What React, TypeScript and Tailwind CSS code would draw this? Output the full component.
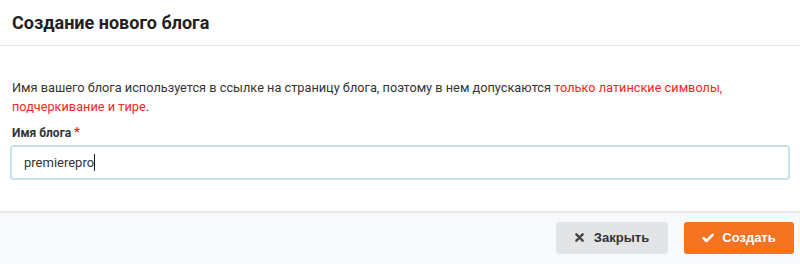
export default function App() {
  return (
    <div className="w-[800px] h-[264px] bg-white flex flex-col font-['Roboto',sans-serif] text-[#333]">
      <div className="h-[46px] border-b border-[#e6e6e6] flex items-center px-3">
        <h1 className="text-[18px] font-bold text-[#222] leading-none">Создание нового блога</h1>
      </div>
      <div className="flex-1 px-[10px] pt-[32px]">
        <p className="px-[2px] text-[12.75px] leading-[19px] text-[#333]">
          Имя вашего блога используется в ссылке на страницу блога, поэтому в нем допускаются{" "}
          <span className="text-[#ff2424]">только латинские символы,</span>{" "}
          <span className="text-[#ff2424]">подчеркивание и тире</span>.
        </p>
        <label className="block px-[2px] mt-[9px] text-[12px] font-bold text-[#333] leading-[16px]">
          Имя блога <span className="text-[#ff2424] align-top text-[13px] leading-none">*</span>
        </label>
        <div className="mt-[4px] h-[35px] rounded-[4px] border-2 border-[#c9dfe9] flex items-center px-[12px] text-[13px] text-[#333]">
          premierepro<span className="w-px h-[17px] bg-[#222]" />
        </div>
      </div>
      <div className="h-[53px] border-t-2 border-[#e8e8e8] bg-[#f8f9fa] flex items-center justify-end gap-4 pr-[6px] pb-[2px] font-['Liberation_Sans',sans-serif]">
        <button className="w-[112px] h-[32px] rounded-[3px] bg-[#e3e4e6] text-[#333] text-[13px] font-bold flex items-center justify-center gap-[10px]">
          <svg width="9" height="9" viewBox="0 0 10 10" className="text-[#444]">
            <path d="M1.5 1.5 L8.5 8.5 M8.5 1.5 L1.5 8.5" stroke="currentColor" strokeWidth="2.6" strokeLinecap="round" />
          </svg>
          Закрыть
        </button>
        <button className="w-[110px] h-[32px] rounded-[3px] bg-[#f47321] text-white text-[13px] font-bold flex items-center justify-center gap-[8px]">
          <svg width="12" height="10" viewBox="0 0 12 10">
            <path d="M1.5 5.2 L4.5 8 L10.5 1.8" stroke="currentColor" strokeWidth="2.6" fill="none" strokeLinecap="round" strokeLinejoin="round" />
          </svg>
          Создать
        </button>
      </div>
    </div>
  );
}
